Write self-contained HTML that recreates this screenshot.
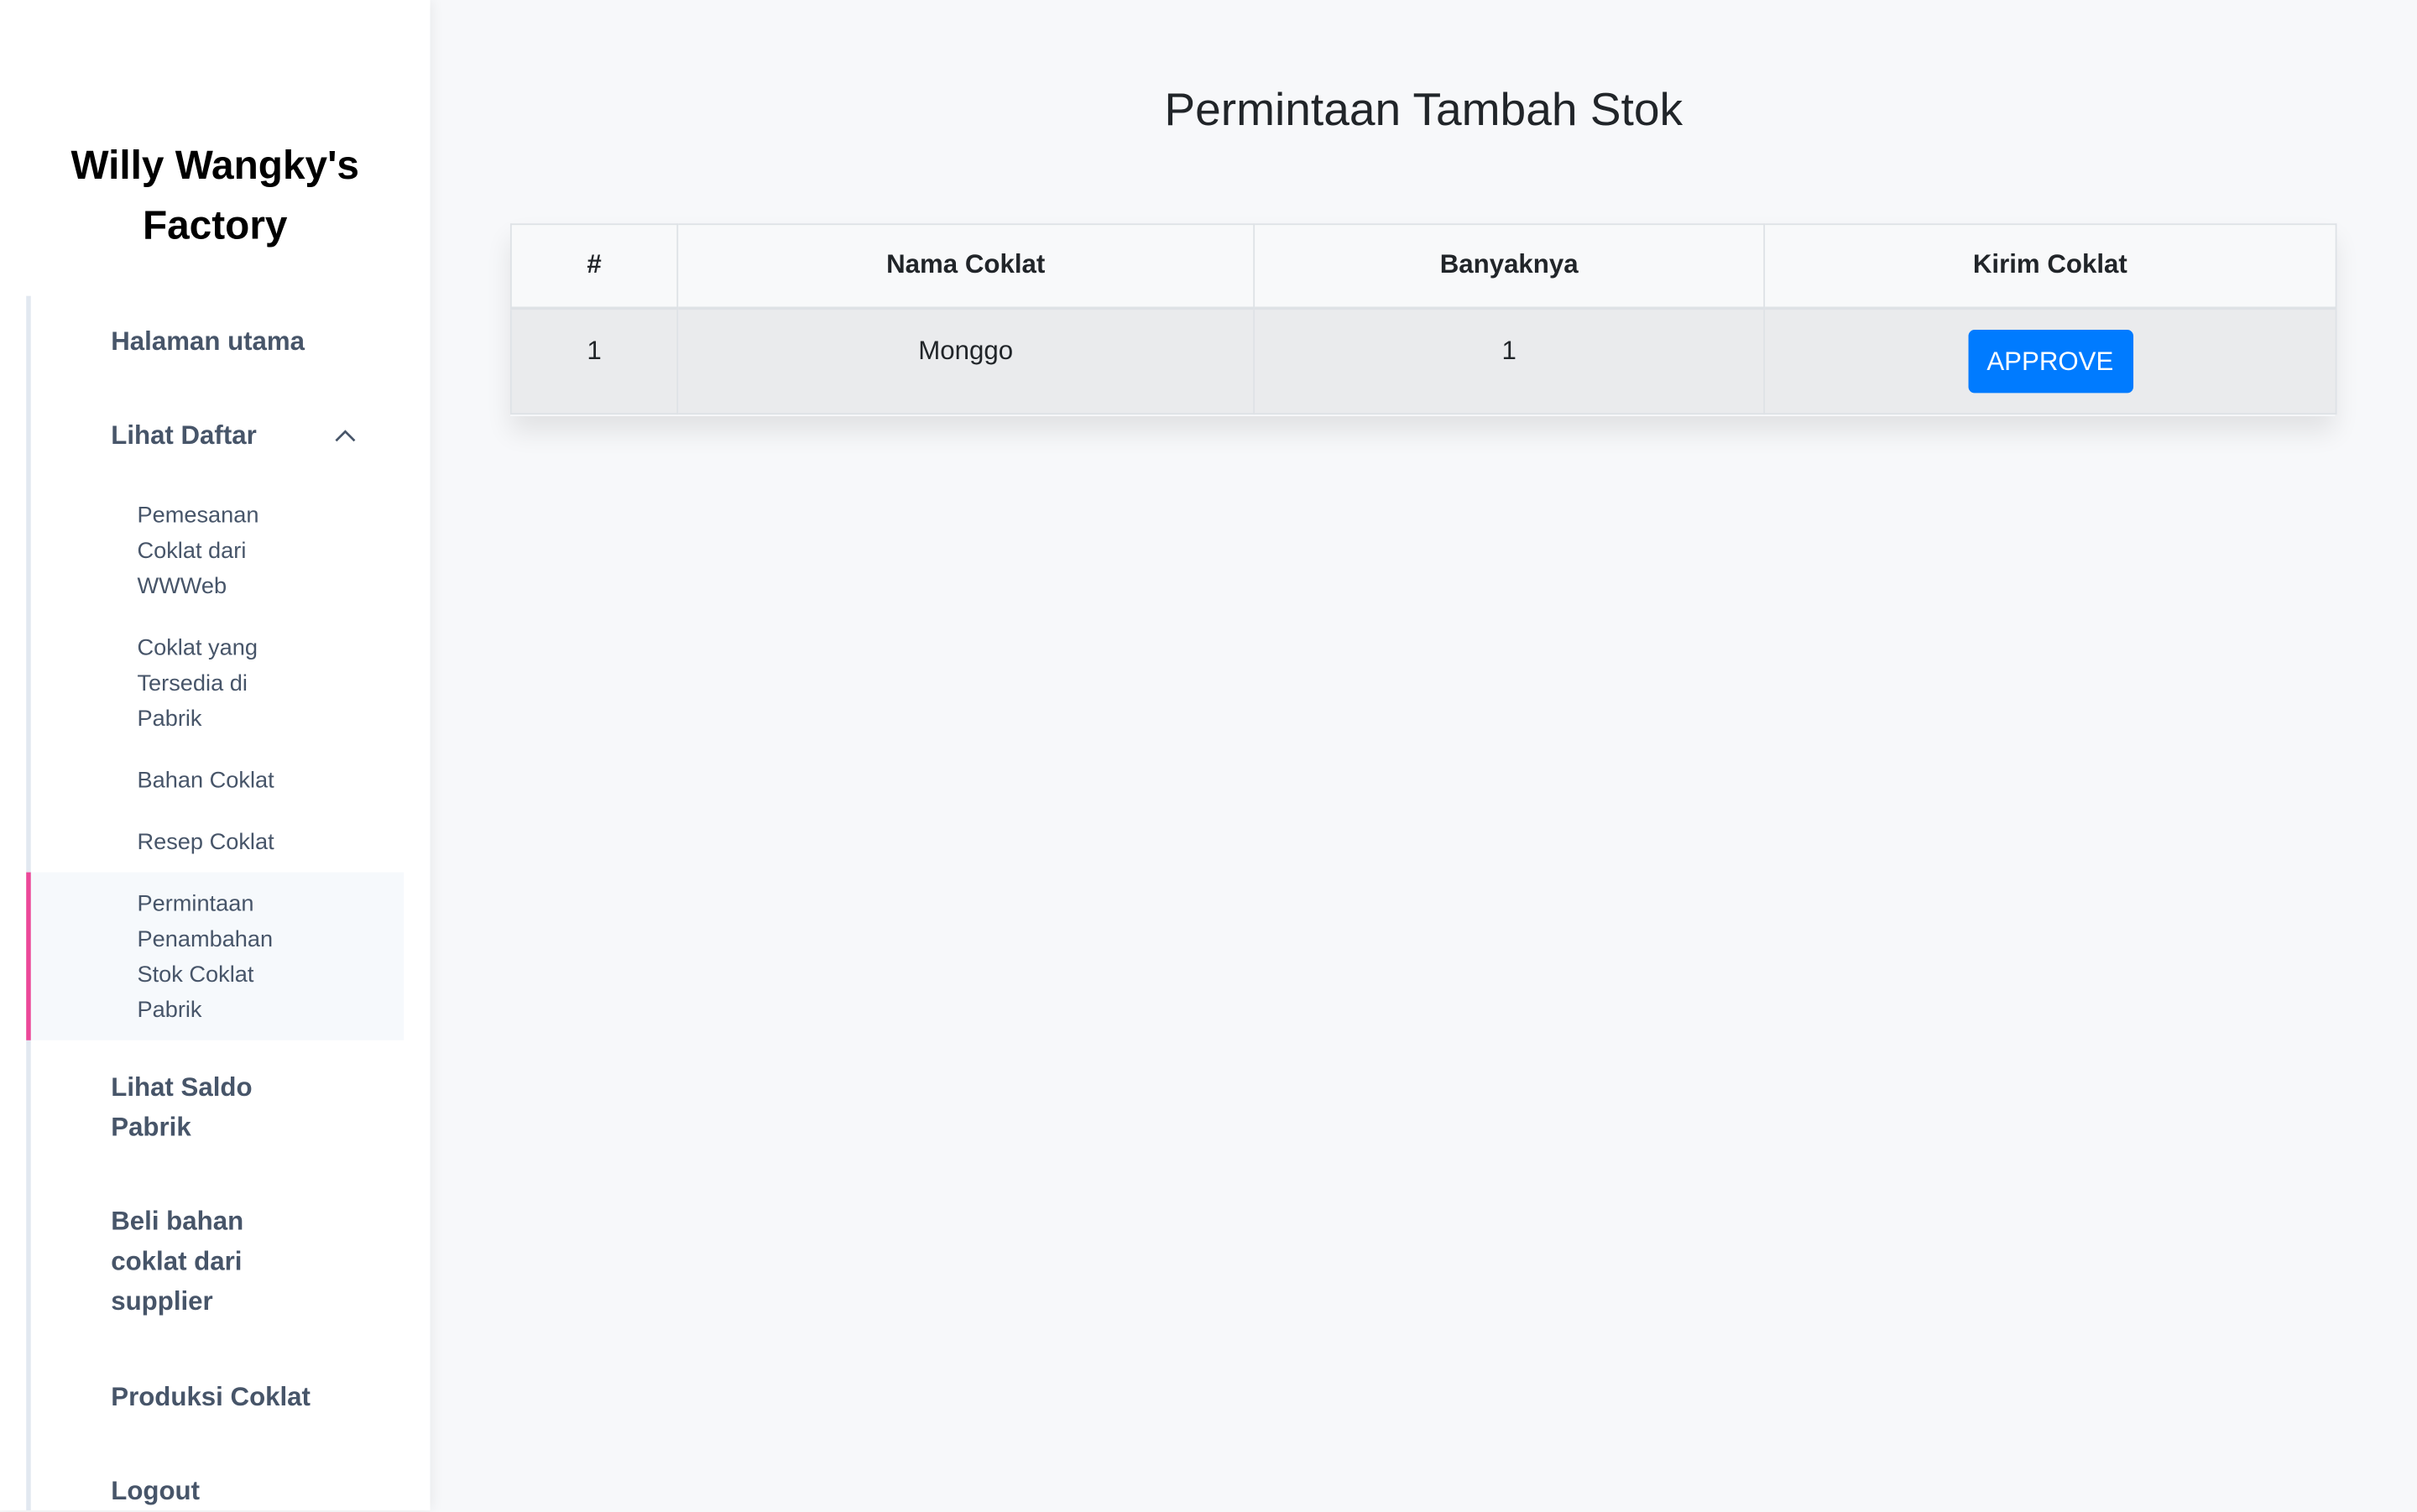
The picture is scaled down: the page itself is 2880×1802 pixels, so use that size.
<!DOCTYPE html>
<html><head><meta charset="utf-8"><style>
html,body{margin:0;padding:0;width:2880px;height:1800px;overflow:hidden;background:#f7f8fa}
#w{position:absolute;left:0;top:0;width:1568px;height:980px;transform:scale(1.836735);transform-origin:0 0;font-family:"Liberation Sans",sans-serif}
.sb{position:absolute;left:0;top:0;width:279px;height:980px;background:#fff;box-shadow:2px 0 8px rgba(0,0,0,0.06)}
.t{position:absolute;white-space:nowrap}
.nav{position:absolute;left:72px;font-size:17px;color:#475569;font-weight:bold;line-height:26px}
.sub{position:absolute;left:89px;font-size:14.8px;color:#475569;line-height:23px}
th,td{border:1px solid #dee2e6;text-align:center;padding:0}
</style></head><body><div id="w">
<div class="sb">
 <div class="t" style="left:0;width:279px;text-align:center;top:88px;font-size:26px;font-weight:bold;line-height:39px;color:#000;white-space:normal">Willy Wangky's<br>Factory</div>
 <div style="position:absolute;left:17px;top:192px;width:3px;height:788px;background:#e2e8f0"></div>
 <div style="position:absolute;left:17px;top:566px;width:245px;height:109px;background:#f6f9fc;border-left:3px solid #ec4899;box-sizing:border-box"></div>
 <div class="nav" style="top:209px">Halaman utama</div>
 <div class="nav" style="top:270px">Lihat Daftar</div>
 <svg style="position:absolute;left:216px;top:276px" width="16" height="12" viewBox="0 0 16 12"><path d="M2 10 L8 4 L14 10" fill="none" stroke="#475569" stroke-width="1.5"/></svg>
 <div class="sub" style="top:324px">Pemesanan<br>Coklat dari<br>WWWeb</div>
 <div class="sub" style="top:410px">Coklat yang<br>Tersedia di<br>Pabrik</div>
 <div class="sub" style="top:496px">Bahan Coklat</div>
 <div class="sub" style="top:536px">Resep Coklat</div>
 <div class="sub" style="top:576px">Permintaan<br>Penambahan<br>Stok Coklat<br>Pabrik</div>
 <div class="nav" style="top:693px">Lihat Saldo<br>Pabrik</div>
 <div class="nav" style="top:780px">Beli bahan<br>coklat dari<br>supplier</div>
 <div class="nav" style="top:894px">Produksi Coklat</div>
 <div class="nav" style="top:955px">Logout</div>
</div>
<div class="t" style="left:279px;width:1289px;text-align:center;top:53px;font-size:30px;color:#212529;line-height:38px">Permintaan Tambah Stok</div>
<div style="position:absolute;left:331px;top:145px;width:1184px;height:125px;box-shadow:0 10px 16px rgba(0,0,0,0.09)"></div>
<table style="position:absolute;left:331px;top:145px;width:1185px;border-collapse:collapse;font-size:17px;color:#212529">
<tr style="height:54px;background:#f8f9fa;font-weight:bold"><th style="width:107px;border-bottom:2px solid #dee2e6">#</th><th style="width:373px;border-bottom:2px solid #dee2e6">Nama Coklat</th><th style="width:330px;border-bottom:2px solid #dee2e6">Banyaknya</th><th style="border-bottom:2px solid #dee2e6">Kirim Coklat</th></tr>
<tr style="height:69px;background:#eaebed"><td style="vertical-align:top;padding-top:17px">1</td><td style="vertical-align:top;padding-top:17px">Monggo</td><td style="vertical-align:top;padding-top:17px">1</td><td><div style="display:inline-block;width:107px;height:41px;line-height:41px;background:#007bff;color:#fff;border-radius:4px;font-size:17px;margin-top:1px">APPROVE</div></td></tr>
</table>
</div></body></html>
